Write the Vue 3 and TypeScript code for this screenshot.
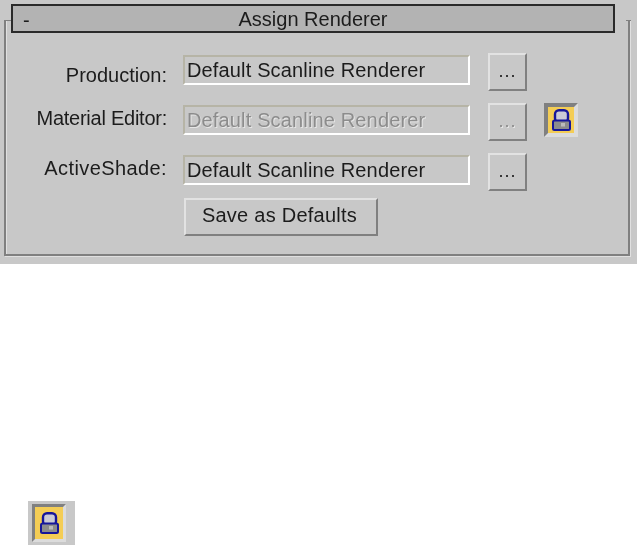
<template>
  <div class="page">
    <section class="panel">
      <div class="group">
        <header class="rollout">
          <span class="minus">-</span>
          <span class="title">Assign Renderer</span>
        </header>

        <div class="rows">
          <div v-for="row in rows" :key="row.label" class="row">
            <label class="label" :class="row.labelClass">{{ row.label }}</label>
            <div class="field" :class="{ disabled: row.disabled }">Default Scanline Renderer</div>
            <button class="more" :class="{ disabled: row.disabled }" type="button">...</button>
            <div v-if="row.locked" class="lock-button">
              <svg class="lock" viewBox="0 0 19 22" width="19" height="22">
                <rect x="3" y="1.200" width="13" height="12" rx="4" fill="#cacad6" stroke="#16169a" stroke-width="2.400" />
                <rect x="1" y="11.500" width="17" height="9.500" rx="1.500" fill="#8c8c8c" stroke="#16169a" stroke-width="2" />
                <rect x="9" y="14" width="4" height="3.500" fill="#bcbcbc" />
              </svg>
            </div>
          </div>

          <div class="row save-row">
            <button class="save" type="button">Save as Defaults</button>
          </div>
        </div>
      </div>
    </section>

    <div class="legend">
      <div class="lock-button large">
        <svg class="lock" viewBox="0 0 19 22" width="19" height="22">
          <rect x="3" y="1.200" width="13" height="12" rx="4" fill="#cacad6" stroke="#16169a" stroke-width="2.400" />
          <rect x="1" y="11.500" width="17" height="9.500" rx="1.500" fill="#8c8c8c" stroke="#16169a" stroke-width="2" />
          <rect x="9" y="14" width="4" height="3.500" fill="#bcbcbc" />
        </svg>
      </div>
    </div>
  </div>
</template>

<script setup lang="ts">
interface RendererRow {
  label: string
  labelClass: string
  disabled: boolean
  locked: boolean
}

const rows: RendererRow[] = [
  { label: 'Production:', labelClass: 'low', disabled: false, locked: false },
  { label: 'Material Editor:', labelClass: 'high tight', disabled: true, locked: true },
  { label: 'ActiveShade:', labelClass: 'high wide', disabled: false, locked: false }
]
</script>

<style>
html,
body {
  background: #ffffff;
}
</style>

<style scoped>
.page {
  width: 637px;
  height: 545px;
  overflow: hidden;
  background: #ffffff;
  font-family: "Liberation Sans", Arial, sans-serif;
  font-size: 20px;
  color: #1c1c1c;
}

.panel {
  height: 264px;
  box-sizing: border-box;
  padding: 20px 7px 0 4px;
  background: #c8c8c8;
}

.group {
  position: relative;
  height: 236px;
  box-sizing: border-box;
  border-left: 2px solid #808080;
  border-right: 2px solid #808080;
  border-bottom: 2px solid #808080;
  box-shadow: inset 1px 0 0 #e0e0e0, 1px 1px 0 #e0e0e0;
}

.group::before,
.group::after {
  content: "";
  position: absolute;
  top: 0;
  width: 5px;
  height: 1px;
  background: #808080;
}

.group::before {
  left: 0;
}

.group::after {
  right: -3px;
}

.rollout {
  position: absolute;
  top: -16px;
  left: 5px;
  width: 604px;
  height: 29px;
  box-sizing: border-box;
  display: flex;
  align-items: center;
  justify-content: center;
  background: #b3b3b3;
  border: 2px solid #2a2a2a;
  line-height: 1;
}

.minus {
  position: absolute;
  left: 10px;
  top: 4px;
}

.rows {
  padding-top: 35px;
  display: flex;
  flex-direction: column;
}

.row {
  height: 50px;
  display: flex;
  align-items: flex-start;
}

.label {
  width: 161px;
  text-align: right;
  line-height: 22px;
  white-space: nowrap;
}

.label.low {
  padding-top: 9px;
}

.label.high {
  padding-top: 2px;
}

.label.tight {
  letter-spacing: -0.25px;
}

.label.wide {
  letter-spacing: 0.4px;
}

.field {
  width: 287px;
  height: 30px;
  margin-left: 16px;
  box-sizing: border-box;
  padding-left: 2px;
  border: 2px solid;
  border-color: #b6b4a6 #ffffff #ffffff #b6b4a6;
  line-height: 26px;
  letter-spacing: 0.15px;
  white-space: nowrap;
}

.field.disabled,
.more.disabled {
  color: #8c8c8c;
  text-shadow: 1px 1px 0 #e6e6e6;
}

.more,
.save {
  box-sizing: border-box;
  padding: 0;
  background: #c8c8c8;
  border: 2px solid;
  border-color: #e2e2e2 #808080 #808080 #e2e2e2;
  font-family: inherit;
  color: inherit;
}

.more {
  width: 39px;
  height: 38px;
  margin-left: 18px;
  margin-top: -2px;
  padding-bottom: 2px;
  font-size: 18px;
  letter-spacing: 1px;
}

.lock-button {
  width: 34px;
  height: 34px;
  margin-left: 17px;
  margin-top: -2px;
  box-sizing: border-box;
  display: flex;
  align-items: center;
  justify-content: center;
  background: #f4cd55;
  border: 4px solid;
  border-color: #808080 #dcdcdc #dcdcdc #808080;
}

.save-row {
  padding-left: 178px;
}

.save {
  width: 194px;
  height: 38px;
  margin-top: -7px;
  padding-bottom: 3px;
  padding-right: 3px;
  font-size: 20px;
  letter-spacing: 0.25px;
}

.legend {
  margin-top: 237px;
  margin-left: 28px;
  width: 47px;
  height: 44px;
  box-sizing: border-box;
  padding: 3px 0 0 4px;
  background: #c8c8c8;
}

.lock-button.large {
  margin: 0;
  height: 38px;
  border-width: 3px;
}

.panel,
.legend {
  filter: blur(0.4px);
}
</style>
